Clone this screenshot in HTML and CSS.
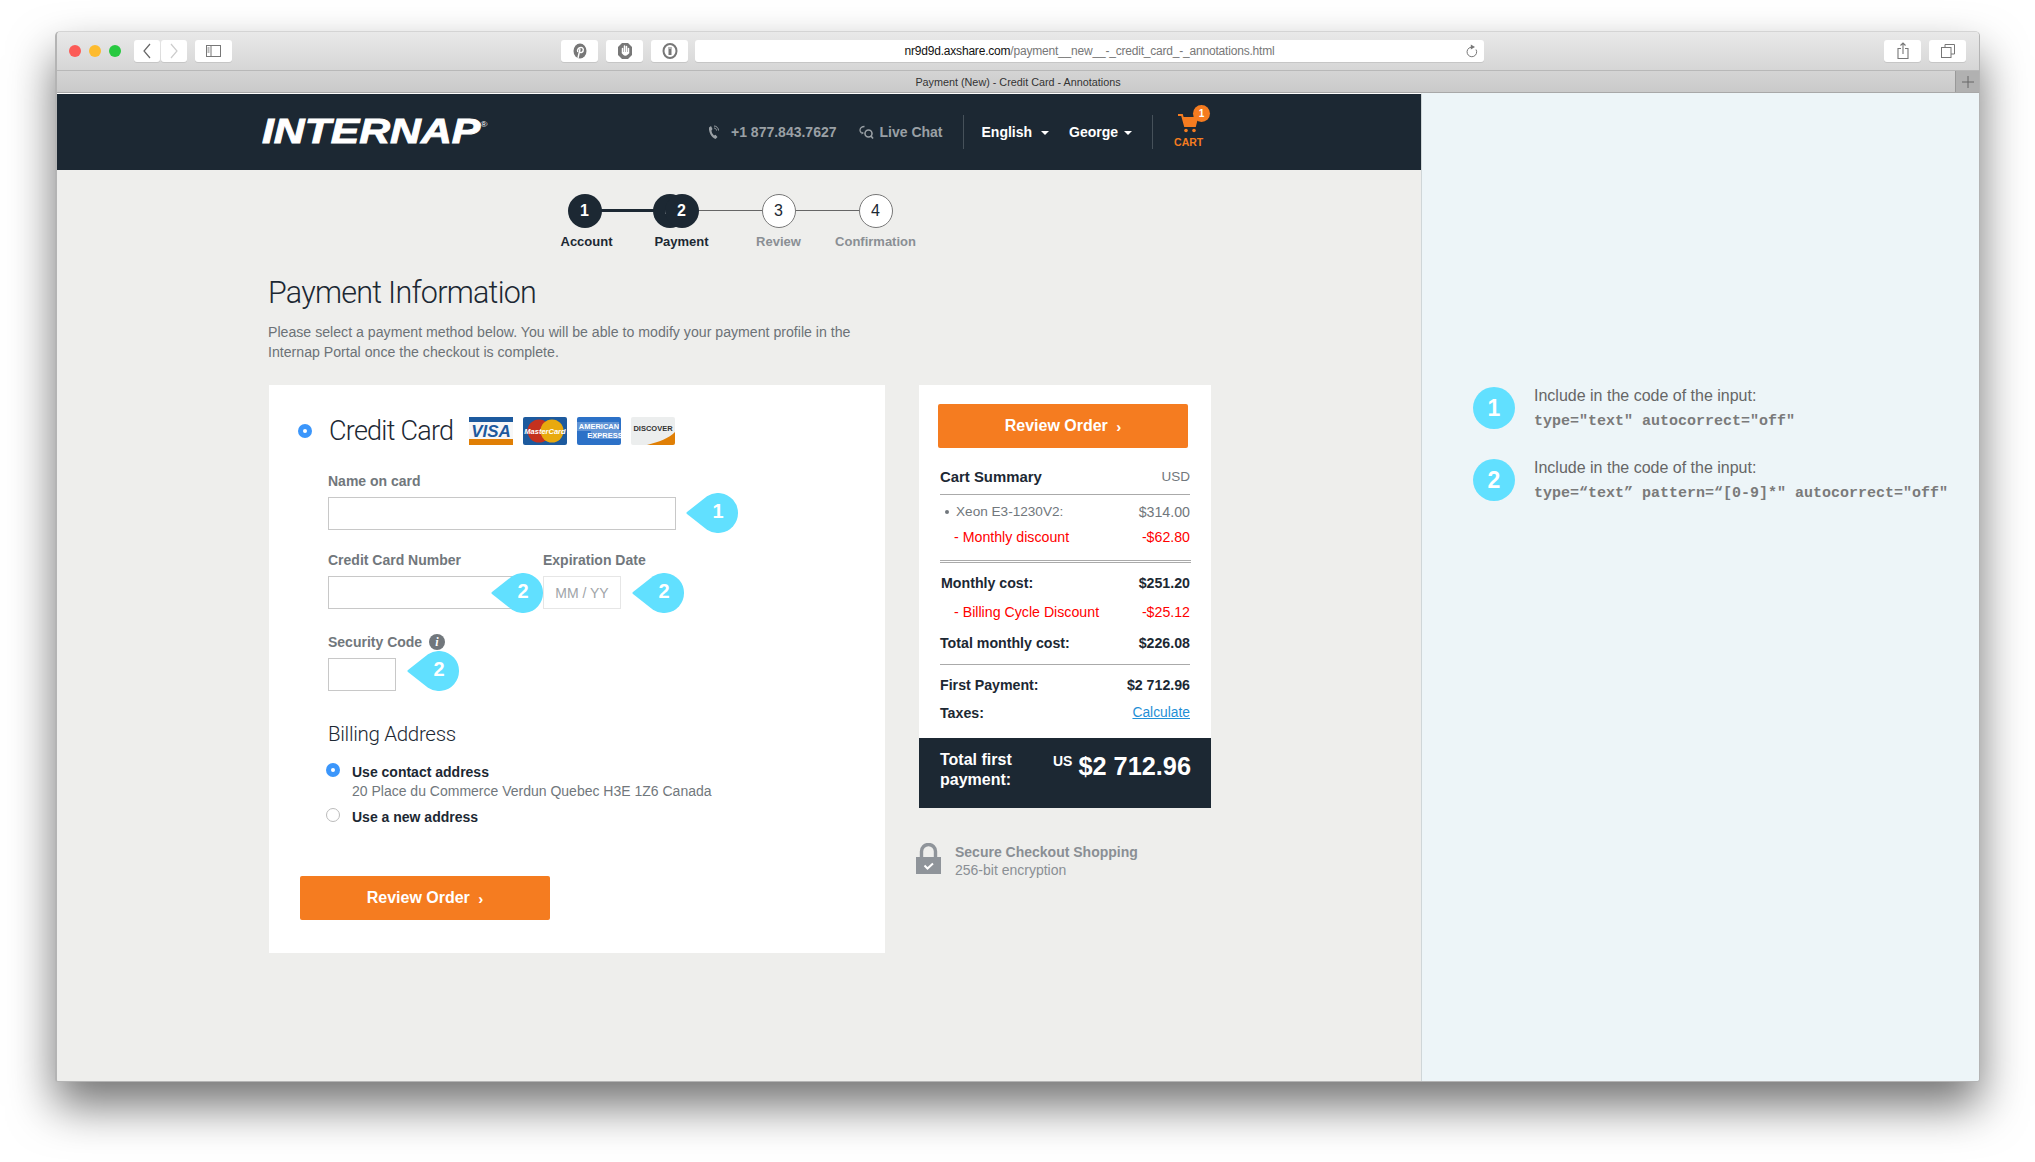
FILE: index.html
```html
<!DOCTYPE html>
<html lang="en">
<head>
<meta charset="utf-8">
<title>Payment (New) - Credit Card - Annotations</title>
<link rel="stylesheet" href="styles.css">
</head>
<body>
<div class="window">
  <div class="toolbar">
    <span class="light red"></span><span class="light yellow"></span><span class="light green"></span>
    <span class="tbtn nav back"><svg width="10" height="16" viewBox="0 0 10 16"><path d="M8 1 2 8l6 7" fill="none" stroke="#666" stroke-width="1.2"/></svg></span>
    <span class="tbtn nav"><svg width="10" height="16" viewBox="0 0 10 16"><path d="M2 1l6 7-6 7" fill="none" stroke="#ccc" stroke-width="1.2"/></svg></span>
    <span class="tbtn wide side"><svg width="15" height="12" viewBox="0 0 15 12"><rect x=".5" y=".5" width="14" height="11" fill="none" stroke="#777"/><path d="M5 .5v11M1.5 3h2M1.5 5h2M1.5 7h2" stroke="#777" fill="none"/></svg></span>
    <span class="tbtn wide ext"><svg width="16" height="18" viewBox="0 0 16 18"><ellipse cx="8" cy="9" rx="6.500" ry="7.500" fill="#777"/><path d="M6 16l2-9" stroke="#fff" stroke-width="1.400" fill="none"/><path d="M5.800 10C4 6 11 3.500 11.300 7.500c.2 3-2.800 3.800-3.800 2.300" fill="none" stroke="#fff" stroke-width="1.400"/></svg></span>
    <span class="tbtn wide ext-next"><svg width="16" height="18" viewBox="0 0 16 18"><path d="M5 1h6l4 4v8l-4 4H5l-4-4V5z" fill="#777"/><path d="M5.500 11V6.500M7.500 10V4M9.500 10V4.500M11.500 11V6.500" stroke="#fff" stroke-width="1.500" stroke-linecap="round"/><path d="M4.800 10c1 5 6 5 7.400 0z" fill="#fff"/></svg></span>
    <span class="tbtn wide ext-next"><svg width="16" height="18" viewBox="0 0 16 18"><ellipse cx="8" cy="9" rx="6.500" ry="7" fill="none" stroke="#777" stroke-width="2"/><path d="M8 5v8" stroke="#777" stroke-width="3"/><circle cx="8" cy="6" r=".8" fill="#fff"/></svg></span>
    <div class="url"><span class="url-text"><span class="host">nr9d9d.axshare.com</span>/payment__new__-_credit_card_-_annotations.html</span>
      <svg class="reload" width="12" height="15" viewBox="0 0 12 15"><path d="M5 3.200A4.800 4.800 0 1 0 10 5.500" fill="none" stroke="#777"/><path d="M4.800.5v5L9 3z" fill="#777"/></svg>
    </div>
    <div class="tools-right">
      <span class="tbtn wide"><svg width="12" height="18" viewBox="0 0 12 18"><path d="M4 6.500H1v10h10v-10H8M6 12V1M3.500 3.500 6 1l2.500 2.500" fill="none" stroke="#777" stroke-width="1.100"/></svg></span>
      <span class="tbtn wide"><svg width="14" height="14" viewBox="0 0 14 14"><rect x=".5" y="3.500" width="9.500" height="10" fill="none" stroke="#777"/><path d="M4 3.500V.5h9.500v9.500H10" fill="none" stroke="#777"/></svg></span>
    </div>
  </div>
  <div class="tabbar"><span class="tab-title">Payment (New) - Credit Card - Annotations</span>
    <span class="tab-add"><svg width="12" height="12" viewBox="0 0 12 12"><path d="M6 0v12M0 6h12" stroke="#666"/></svg></span>
  </div>
  <div class="content">
    <main class="main">
      <header class="head">
        <div class="logo">INTERNAP<sup>®</sup></div>
        <nav class="head-nav">
          <svg class="ico-phone" width="13" height="15" viewBox="0 0 13 15"><path d="M1 2.500 3 1l1.500 3L3.500 5.500c.2 2 1 3.500 2.500 5l1.500-.8L9.500 12 7.500 14C3.500 12.500.5 7 1 2.500z" fill="#9aa0a5"/><path d="M6 1c2.500 0 4.500 2 4.500 4.500M6 3c1.300 0 2.500 1.200 2.500 2.500" fill="none" stroke="#9aa0a5"/></svg>
          <span class="nav-muted phone">+1 877.843.7627</span>
          <svg class="ico-chat" width="15" height="15" viewBox="0 0 15 15"><path d="M5.500 1.500C2.800 1.500 1 3.200 1 5.200c0 1.200.7 2.200 1.500 2.800" fill="none" stroke="#9aa0a5" stroke-width="1.300"/><path d="M2.500 6.500v3l2.500-1.500" fill="#9aa0a5"/><circle cx="9.500" cy="8.500" r="3.500" fill="none" stroke="#9aa0a5" stroke-width="1.600"/><path d="M12 11l2 2.500" stroke="#9aa0a5" stroke-width="1.600"/></svg>
          <span class="nav-muted">Live Chat</span>
          <span class="nav-sep first"></span>
          <span class="nav-strong">English</span><span class="caret"></span>
          <span class="nav-strong george">George</span><span class="caret caret-tight"></span>
          <span class="nav-sep"></span>
          <div class="cart">
            <svg width="22" height="24" viewBox="0 0 22 24"><path d="M1 3h4l3 11h10l2-8H6" fill="none" stroke="#f57c20" stroke-width="2"/><path d="M6 6h14l-2 8H8z" fill="#f57c20"/><circle cx="9" cy="18.500" r="1.800" fill="#f57c20"/><circle cx="17" cy="18.500" r="1.800" fill="#f57c20"/></svg>
            <span class="cart-badge">1</span>
            <span class="cart-label">CART</span>
          </div>
        </nav>
      </header>
      <div class="page">
        <ol class="steps">
          <li class="step done"><span class="dot">1</span><span class="step-label">Account</span></li>
          <li class="step current"><span class="dot-back"><i></i></span><span class="dot">2</span><span class="step-label">Payment</span></li>
          <li class="step todo"><span class="dot">3</span><span class="step-label">Review</span></li>
          <li class="step todo last"><span class="dot">4</span><span class="step-label">Confirmation</span></li>
        </ol>
        <h1 class="title">Payment Information</h1>
        <p class="intro">Please select a payment method below. You will be able to modify your payment profile in the<br>Internap Portal once the checkout is complete.</p>
        <div class="checkout">
          <section class="card-left">
            <div class="method">
              <span class="radio on"></span>
              <span class="method-name">Credit Card</span>
              <div class="brands">
                <svg width="44" height="28" viewBox="0 0 44 28"><rect width="44" height="28" rx="2" fill="#f7f7f7"/><rect width="44" height="5" fill="#1d5a9e"/><rect y="22" width="44" height="6" fill="#e07f05"/><text x="22" y="20" text-anchor="middle" class="b-visa">VISA</text></svg>
                <svg width="44" height="28" viewBox="0 0 44 28"><rect width="44" height="28" rx="2" fill="#1d5a9e"/><circle cx="16" cy="14" r="11.500" fill="#c4311f"/><circle cx="29" cy="14" r="11.500" fill="#e8a90e"/><text x="22" y="16.500" text-anchor="middle" class="b-mc">MasterCard</text></svg>
                <svg width="44" height="28" viewBox="0 0 44 28"><rect width="44" height="28" rx="2" fill="#2c71c7"/><path d="M0 5h42v8h2v9H14v-8H0z" fill="#fff" opacity=".25"/><text x="22" y="11.500" text-anchor="middle" class="b-amex">AMERICAN</text><text x="28" y="21" text-anchor="middle" class="b-amex">EXPRESS</text></svg>
                <svg width="44" height="28" viewBox="0 0 44 28"><rect width="44" height="28" rx="2" fill="#eceeee"/><path d="M16 28C28 25 38 21 44 15v11a2 2 0 0 1-2 2z" fill="#e07f05"/><text x="22" y="14" text-anchor="middle" class="b-disc">DISCOVER</text></svg>
              </div>
            </div>
            <form class="form">
              <label class="lab">Name on card</label>
              <div class="wrap w-name">
                <input class="inp" type="text" aria-label="Name on card">
                <span class="bubble b-a"><svg width="52" height="40" viewBox="0 0 52 40"><path d="M1 19 21 3.300A20 20 0 1 1 21 36.700L1 21a1.300 1.300 0 0 1 0-2z" fill="#61e0ff"/></svg><b>1</b></span>
              </div>
              <div class="row-two">
                <div class="f-num">
                  <label class="lab">Credit Card Number</label>
                  <div class="wrap w-num">
                    <input class="inp" type="text" aria-label="Credit Card Number">
                    <span class="bubble b-b"><svg width="52" height="40" viewBox="0 0 52 40"><path d="M1 19 21 3.300A20 20 0 1 1 21 36.700L1 21a1.300 1.300 0 0 1 0-2z" fill="#61e0ff"/></svg><b>2</b></span>
                  </div>
                </div>
                <div class="f-exp">
                  <label class="lab">Expiration Date</label>
                  <div class="wrap w-exp">
                    <input class="inp light-inp" type="text" placeholder="MM / YY" aria-label="Expiration Date">
                    <span class="bubble b-c"><svg width="52" height="40" viewBox="0 0 52 40"><path d="M1 19 21 3.300A20 20 0 1 1 21 36.700L1 21a1.300 1.300 0 0 1 0-2z" fill="#61e0ff"/></svg><b>2</b></span>
                  </div>
                </div>
              </div>
              <label class="lab lab-sec">Security Code <span class="info">i</span></label>
              <div class="wrap w-sec">
                <input class="inp" type="text" aria-label="Security Code">
                <span class="bubble b-d"><svg width="52" height="40" viewBox="0 0 52 40"><path d="M1 19 21 3.300A20 20 0 1 1 21 36.700L1 21a1.300 1.300 0 0 1 0-2z" fill="#61e0ff"/></svg><b>2</b></span>
              </div>
              <h2 class="billing">Billing Address</h2>
              <div class="addr first-addr"><span class="radio on"></span><div><div class="addr-name">Use contact address</div><div class="addr-line">20 Place du Commerce Verdun Quebec H3E 1Z6 Canada</div></div></div>
              <div class="addr"><span class="radio"></span><div class="addr-name">Use a new address</div></div>
              <a class="btn btn-left">Review Order <span class="chev">›</span></a>
            </form>
          </section>
          <aside class="side-col">
            <section class="card-right">
              <a class="btn btn-right">Review Order <span class="chev">›</span></a>
              <div class="sum">
                <div class="r head-r"><strong>Cart Summary</strong><span class="muted usd">USD</span></div>
                <div class="r xeon muted"><span class="bullet">Xeon E3-1230V2:</span><span>$314.00</span></div>
                <div class="r disc red-t"><span class="ind">- Monthly discount</span><span>-$62.80</span></div>
                <div class="r monthly"><strong>Monthly cost:</strong><strong>$251.20</strong></div>
                <div class="r cycle red-t"><span class="ind">- Billing Cycle Discount</span><span>-$25.12</span></div>
                <div class="r total"><strong>Total monthly cost:</strong><strong>$226.08</strong></div>
                <div class="r first-pay"><strong>First Payment:</strong><strong>$2 712.96</strong></div>
                <div class="r taxes"><strong>Taxes:</strong><a class="calc">Calculate</a></div>
              </div>
              <div class="band">
                <div class="band-label">Total first<br>payment:</div>
                <div class="band-amt"><span class="band-us">US</span><span class="band-val">$2 712.96</span></div>
              </div>
            </section>
            <div class="secure">
              <svg width="25" height="31" viewBox="0 0 25 31"><path d="M5.500 14V8.500a7 7 0 0 1 14 0V14" fill="none" stroke="#8f949a" stroke-width="3.400"/><rect y="14" width="25" height="17" fill="#8f949a"/><path d="M8.500 22.500l3 3 5.500-5" fill="none" stroke="#fff" stroke-width="2"/></svg>
              <div><div class="secure-t">Secure Checkout Shopping</div><div class="secure-s">256-bit encryption</div></div>
            </div>
          </aside>
        </div>
      </div>
    </main>
    <aside class="notes">
      <div class="note"><span class="note-n">1</span><div><div class="note-t">Include in the code of the input:</div><code class="note-c">type="text" autocorrect="off"</code></div></div>
      <div class="note"><span class="note-n">2</span><div><div class="note-t">Include in the code of the input:</div><code class="note-c">type=“text” pattern=“[0-9]*" autocorrect="off"</code></div></div>
    </aside>
  </div>
</div>
</body>
</html>
```
FILE: styles.css
```css
*{box-sizing:border-box}
html,body{margin:0;padding:0;background:#fff}
body{width:2035px;height:1162px;overflow:hidden;font-family:"Liberation Sans",Arial,sans-serif;color:#1c2833}
.window{margin:31px 0 0 55px;width:1925px;height:1051px;border:1px solid #b4b4b4;border-left-width:2px;border-top-color:#d4d4d4;border-radius:5px 5px 3px 3px;box-shadow:0 24px 46px rgba(0,0,0,.55);display:flex;flex-direction:column;overflow:hidden;background:#eeeeec}

.toolbar{height:39px;flex:none;display:flex;align-items:flex-start;padding:8px 13px 0 12px;background:linear-gradient(#e9e9e9,#d6d6d6);border-bottom:1px solid #b8b8b8}
.light{width:12px;height:12px;border-radius:50%;margin:5px 8px 0 0;flex:none}
.red{background:#fc5b57}.yellow{background:#fdbb2e}.green{background:#27c940}
.tbtn{height:22px;background:#fff;border-radius:3px;display:flex;align-items:center;justify-content:center;flex:none;box-shadow:0 1px 0 #c6c6c6}
.nav{width:26px;margin-right:1px}
.back{margin-left:5px}
.wide{width:37px}
.side{margin-left:7px}
.ext{margin-left:329px}
.ext-next{margin-left:8px}
.url{margin-left:7px;width:789px;height:22px;background:#fff;border-radius:3px;box-shadow:0 1px 0 #c6c6c6;display:flex;align-items:center;justify-content:center;position:relative;flex:none}
.url-text{font-size:12px;letter-spacing:-.2px;color:#777}
.host{color:#111}
.reload{position:absolute;right:6px;top:4px}
.tools-right{margin-left:auto;display:flex;gap:8px}

.tabbar{height:22px;flex:none;display:flex;align-items:center;justify-content:center;position:relative;background:linear-gradient(#d4d4d4,#cacaca);border-bottom:1px solid #a8a8a8}
.tab-title{font-size:10.800px;color:#333}
.tab-add{position:absolute;right:0;top:0;width:24px;height:21px;background:#b1b1b1;display:flex;align-items:center;justify-content:center;border-left:1px solid #999}

.content{flex:1;display:flex;min-height:0}
.main{width:1365px;flex:none;background:#eeeeec;border-right:1px solid #cfd6d8;border-top:1px solid #fff}

.head{height:76px;background:#1c2833;display:flex;align-items:center;padding-left:205px}
.logo{font-size:35px;font-weight:700;font-style:italic;color:#fff;width:224px;-webkit-text-stroke:.9px #fff;line-height:1;white-space:nowrap;margin-top:-4px;transform:scaleX(1.22);transform-origin:left center}
.logo sup{font-size:8px;font-style:normal;font-weight:400;-webkit-text-stroke:0;vertical-align:16px;line-height:0}
.head-nav{display:flex;align-items:center;margin-left:222px;height:100%}
.nav-muted{font-size:14px;font-weight:700;color:#9aa0a5;white-space:nowrap}
.phone{margin-left:10px}
.ico-chat{margin:0 6px 0 22px}
.nav-strong{font-size:14px;font-weight:700;color:#fff}
.nav-sep{width:1px;height:34px;background:#46515a;margin:0 18px 0 20px}
.nav-sep.first{margin:0 18px 0 20px}
.caret{width:0;height:0;border-left:4px solid transparent;border-right:4px solid transparent;border-top:4px solid #fff;margin-left:9px;margin-top:1px}
.caret-tight{margin-left:6px}
.george{margin-left:20px}
.cart{position:relative;width:36px;height:76px;margin-left:4px}
.cart svg{position:absolute;left:2px;top:18px}
.cart-badge{position:absolute;left:18px;top:11px;width:17px;height:17px;border-radius:50%;background:#f57c20;color:#fff;font-size:10px;font-weight:700;display:flex;align-items:center;justify-content:center}
.cart-label{position:absolute;left:-1px;top:42px;font-size:10.500px;font-weight:700;color:#f57c20;line-height:12px}

.page{padding:24px 0 0 212px}
.steps{list-style:none;display:flex;margin:0 0 0 267px;padding:0}
.step{width:97px;display:flex;flex-direction:column;align-items:center;position:relative}
.dot{width:34px;height:34px;border-radius:50%;display:flex;align-items:center;justify-content:center;font-size:16px;font-weight:700;position:relative;z-index:1}
.done .dot,.current .dot,.dot-back{background:#1c2833;color:#fff}
.todo .dot{background:#fff;border:1px solid #777;color:#1c2833;font-weight:400}
.step::after{content:"";position:absolute;left:50%;top:16px;width:97px;height:1px;background:#666}
.done::after{height:3px;top:15px;background:#1c2833}
.last::after{display:none}
.dot-back{position:absolute;left:20px;top:0;width:34px;height:34px;border-radius:50%;z-index:1}
.dot-back i{position:absolute;left:12px;top:16px;width:2px;height:4px;background:#fff}
.step-label{margin-top:6px;font-size:13px;line-height:16px;font-weight:700;white-space:nowrap;color:#1c2833}
.todo .step-label{color:#8a8f94}
.done .step-label{margin-left:4px}

.title{font-family:Roboto,"Liberation Sans",sans-serif;font-weight:300;font-size:30.500px;letter-spacing:-.75px;line-height:36px;margin:25px 0 0 -1px;color:#1c2833}
.intro{margin:11px 0 0 -1px;font-size:14.150px;line-height:20px;color:#6c7277}
.checkout{display:flex;gap:34px;margin-top:23px;align-items:flex-start}

.card-left{width:616px;height:568px;background:#fff;padding:32px 0 0 29px}
.method{display:flex;align-items:center;height:28px}
.radio{display:block;flex:none;width:14px;height:14px;border-radius:50%;border:1px solid #bbb;background:#fff;position:relative}
.radio.on{border:0;background:#3b96fb}
.radio.on::after{content:"";position:absolute;left:5px;top:5px;width:4px;height:4px;border-radius:50%;background:#fff}
.method-name{font-family:Roboto,"Liberation Sans",sans-serif;font-weight:300;font-size:27px;letter-spacing:-.75px;margin-left:17px;line-height:28px;white-space:nowrap}
.brands{display:flex;gap:10px;margin-left:16px}
.brands svg{display:block}
.b-visa{font:italic 700 17px "Liberation Sans",sans-serif;fill:#1d5a9e}
.b-mc{font:italic 700 7.500px "Liberation Sans",sans-serif;fill:#fff}
.b-amex{font:700 7.500px "Liberation Sans",sans-serif;fill:#fff}
.b-disc{font:700 7.500px "Liberation Sans",sans-serif;fill:#333}

.form{padding:28px 0 0 30px}
.lab{display:block;font-size:14px;line-height:16px;font-weight:700;color:#71777c;margin-bottom:8px;white-space:nowrap}
.wrap{position:relative;height:33px}
.w-name{width:348px}
.w-num{width:200px}
.w-exp{width:78px}
.w-sec{width:68px}
.inp{display:block;width:100%;height:33px;border:1px solid #c8c8c8;background:#fff;padding:0;margin:0;font:14px "Liberation Sans",sans-serif;border-radius:0;outline:none}
.light-inp{border-color:#e6e6e6;text-align:center}
.light-inp::placeholder{color:#a0a4a8;opacity:1}
.row-two{display:flex;margin-top:22px}
.f-num{width:215px}
.lab-sec{margin-top:25px;position:relative}
.info{display:inline-flex;width:16px;height:16px;border-radius:50%;background:#71777c;color:#fff;align-items:center;justify-content:center;font:italic 700 12px "Liberation Serif",serif;margin-left:3px;vertical-align:top}
.bubble{position:absolute;width:52px;height:40px;z-index:2;display:block}
.bubble svg{position:absolute;left:0;top:0}
.bubble b{position:absolute;left:12px;right:0;top:0;line-height:37px;text-align:center;color:#fff;font-size:20px;font-weight:700}
.b-a{left:358px;top:-4px}
.b-b{left:163px;top:-3px}
.b-c{left:89px;top:-3px}
.b-d{left:79px;top:-7px}
.billing{font-family:Roboto,"Liberation Sans",sans-serif;font-weight:300;font-size:20.500px;letter-spacing:-.3px;line-height:24px;margin:31px 0 0;color:#1c2833}
.addr{display:flex;gap:12px;margin:8px 0 0 -2px}
.first-addr{margin-top:17px}
.addr-name{font-size:14px;line-height:18px;font-weight:700;color:#1c2833}
.addr-line{font-size:14px;line-height:18px;color:#71777c;margin-top:1px}
.btn{display:flex;align-items:center;justify-content:center;width:250px;height:44px;background:#f57c20;border-radius:2px;color:#fff;font-size:16px;font-weight:700;white-space:pre}
.btn-left{margin:50px 0 0 -28px}
.chev{font-size:15px;margin-left:4px}

.side-col{width:292px}
.card-right{background:#fff;padding-top:19px}
.btn-right{margin-left:19px}
.sum{margin:20px 0 0 21px;width:250px;font-size:14.200px;line-height:18px;padding-bottom:16px}
.r{display:flex;justify-content:space-between;white-space:nowrap}
.muted{color:#71777c}
.red-t{color:#f00}
.head-r{padding-bottom:8px;border-bottom:1px solid #aaa}
.head-r strong{font-size:14.900px}
.usd{font-size:13.500px}
.xeon{margin-top:8px}
.bullet{padding-left:16px;position:relative;font-size:13.600px}
.bullet::before{content:"";position:absolute;left:5px;top:7px;width:4px;height:4px;border-radius:50%;background:#71777c}
.disc{margin-top:7px}
.ind{padding-left:14px}
.monthly{margin-top:14px;padding:11px 0 0 1px;border-top:3px double #aaa;width:251px}
.monthly strong:last-child{margin-right:1px}
.cycle{margin-top:11px}
.total{margin-top:13px;padding-bottom:12px;border-bottom:1px solid #aaa}
.first-pay{margin-top:11px}
.taxes{margin-top:10px}
.calc{color:#1f8fd6;text-decoration:underline;font-size:13.800px}
.band{height:70px;background:#1c2833;color:#fff;display:flex;justify-content:space-between;padding:12px 20px 0 21px}
.band-label{font-size:16px;font-weight:700;line-height:20px}
.band-amt{display:flex;align-items:flex-start}
.band-us{font-size:14px;font-weight:700;line-height:18px;margin:2px 6px 0 0}
.band-val{font-size:25.300px;font-weight:700;line-height:28px;margin-top:2px}
.secure{display:flex;gap:14px;margin:35px 0 0 -3px}
.secure svg{display:block}
.secure-t{font-size:14px;line-height:18px;font-weight:700;color:#8a8f94}
.secure-s{font-size:14px;line-height:18px;color:#8a8f94}

.notes{flex:1;background:#edf5f8;padding:294px 0 0 51px;display:flex;flex-direction:column;gap:30px}
.note{display:flex;gap:19px;height:42px}
.note-n{width:42px;height:42px;flex:none;border-radius:50%;background:#61e0ff;color:#fff;display:flex;align-items:center;justify-content:center;font-size:23px;font-weight:700}
.note-t{font-size:16px;line-height:20px;color:#666;margin-top:-1px}
.note-c{display:block;font-family:"Liberation Mono",monospace;font-size:15px;font-weight:700;line-height:18px;margin-top:7px;color:#7a7a7a;white-space:nowrap}
```
